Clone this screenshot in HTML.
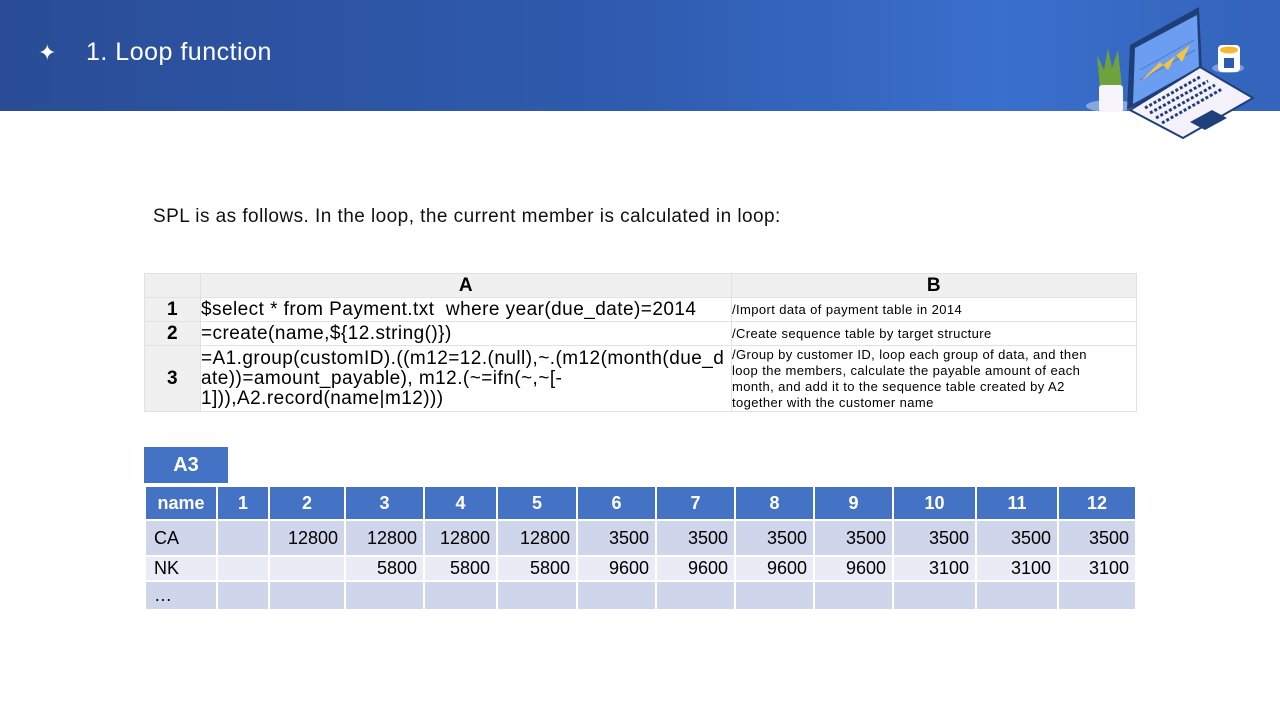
<!DOCTYPE html>
<html><head><meta charset="utf-8"><style>
*{margin:0;padding:0;box-sizing:border-box}
body{width:1280px;height:720px;position:relative;background:#fff;font-family:"Liberation Sans",sans-serif;overflow:hidden}
.hdr{position:absolute;left:0;top:0;width:1280px;height:111px;background:linear-gradient(90deg,#2a4c96 0%,#2f5cb0 50%,#3a6fcc 78%,#3464bb 100%)}
.t{position:absolute;color:#fff;font-size:25px;top:38px}
.a{position:absolute;white-space:nowrap}
table{border-collapse:collapse;position:absolute}
#t1{left:144px;top:273px;width:992px;table-layout:fixed}
#t1 td{border:1px solid #e2e2e2;font-size:19px;color:#000;padding:0;line-height:20px;vertical-align:middle;overflow:hidden;white-space:nowrap;letter-spacing:0.45px}
#t1 .h{background:#f0f0f0;text-align:center;font-weight:bold}
#t1 .n{background:#f0f0f0;text-align:center;font-weight:bold}
#t1 .b{font-size:13px;line-height:16px;letter-spacing:0.4px}
#t2{left:144px;top:485px;width:991px;table-layout:fixed}
#t2 td{border:2px solid #fff;font-size:18px;text-align:right;padding-right:6px;height:34px}
#t2 tr.hh td{background:#4472c4;color:#fff;font-weight:bold;text-align:center;padding:0;height:34px}
#t2 tr.r1 td{background:#cfd5ea;height:36px}
#t2 tr.r2 td{background:#e9ebf5;height:25px}
#t2 tr.r3 td{background:#cfd5ea;height:29px}
#t2 td.l{text-align:left;padding-left:8px}
</style></head><body>
<div class="hdr"></div>
<div class="t" style="left:38px;top:40px;font-size:22px">✦</div>
<div class="t" style="left:86px;letter-spacing:0.5px">1. Loop function</div>
<svg style="position:absolute;left:1060px;top:0" width="220" height="150" viewBox="1060 0 220 150">
<ellipse cx="1110" cy="106" rx="24" ry="6" fill="#a9c0ee" opacity=".7"/>
<path d="M1100 88 L1097 55 L1104 70 L1108 48 L1112 68 L1118 50 L1122 88Z" fill="#6fa23a"/>
<rect x="1099" y="85" width="24" height="27" rx="3" fill="#f7f4fb"/>
<ellipse cx="1228" cy="68" rx="16" ry="5" fill="#a9c0ee" opacity=".6"/>
<rect x="1218" y="45" width="22" height="27" rx="4" fill="#fff"/>
<ellipse cx="1229" cy="50" rx="9" ry="3.5" fill="#f5b82e"/>
<rect x="1224" y="58" width="10" height="10" fill="#2a5bb0"/>
<path d="M1127 110 L1130 45 L1199 7 L1202 70Z" fill="#1f3f7a"/>
<path d="M1133 104 L1135 48 L1197 15 L1199 67Z" fill="#6b9ef0"/>
<path d="M1140 80 L1195 50 M1140 70 L1194 40" stroke="#4a7ad0" stroke-width="1"/>
<path d="M1140 82 L1160 62 L1168 70 L1176 55 L1182 62 L1190 45 L1140 82Z" fill="#f5c33b"/>
<path d="M1130 110 L1200 67 L1253 98 L1183 138Z" fill="#f4f1fb" stroke="#1f3f7a" stroke-width="2"/>
<g stroke="#1f3f7a" stroke-width="3" stroke-dasharray="3 2"><path d="M1145 108 L1200 77"/><path d="M1150 113 L1208 81"/><path d="M1156 118 L1215 85"/><path d="M1162 123 L1222 89"/></g>
<path d="M1190 122 L1212 110 L1227 118 L1205 130Z" fill="#1f3f7a"/>
</svg>
<div class="a" style="left:153px;top:206px;font-size:19px;letter-spacing:0.45px;color:#111">SPL is as follows. In the loop, the current member is calculated in loop:</div>
<table id="t1">
<colgroup><col style="width:56px"><col style="width:531px"><col style="width:405px"></colgroup>
<tr style="height:24px"><td class="h"></td><td class="h">A</td><td class="h">B</td></tr>
<tr style="height:24px"><td class="n">1</td><td>$select * from Payment.txt&nbsp; where year(due_date)=2014</td><td class="b">/Import data of payment table in 2014</td></tr>
<tr style="height:24px"><td class="n">2</td><td>=create(name,${12.string()})</td><td class="b">/Create sequence table by target structure</td></tr>
<tr style="height:66px"><td class="n">3</td><td>=A1.group(customID).((m12=12.(null),~.(m12(month(due_d<br>ate))=amount_payable), m12.(~=ifn(~,~[-<br>1])),A2.record(name|m12)))</td><td class="b">/Group by customer ID, loop each group of data, and then<br>loop the members, calculate the payable amount of each<br>month, and add it to the sequence table created by A2<br>together with the customer name</td></tr>
</table>
<div class="a" style="left:144px;top:447px;width:84px;height:36px;background:#4472c4;color:#fff;font-weight:bold;font-size:20px;text-align:center;line-height:36px">A3</div>
<table id="t2">
<colgroup><col style="width:72px"><col style="width:52px"><col style="width:76px"><col style="width:79px"><col style="width:73px"><col style="width:80px"><col style="width:79px"><col style="width:79px"><col style="width:79px"><col style="width:79px"><col style="width:83px"><col style="width:82px"><col style="width:78px"></colgroup>
<tr class="hh"><td>name</td><td>1</td><td>2</td><td>3</td><td>4</td><td>5</td><td>6</td><td>7</td><td>8</td><td>9</td><td>10</td><td>11</td><td>12</td></tr>
<tr class="r1"><td class="l">CA</td><td></td><td>12800</td><td>12800</td><td>12800</td><td>12800</td><td>3500</td><td>3500</td><td>3500</td><td>3500</td><td>3500</td><td>3500</td><td>3500</td></tr>
<tr class="r2"><td class="l">NK</td><td></td><td></td><td>5800</td><td>5800</td><td>5800</td><td>9600</td><td>9600</td><td>9600</td><td>9600</td><td>3100</td><td>3100</td><td>3100</td></tr>
<tr class="r3"><td class="l">…</td><td></td><td></td><td></td><td></td><td></td><td></td><td></td><td></td><td></td><td></td><td></td><td></td></tr>
</table>
</body></html>
